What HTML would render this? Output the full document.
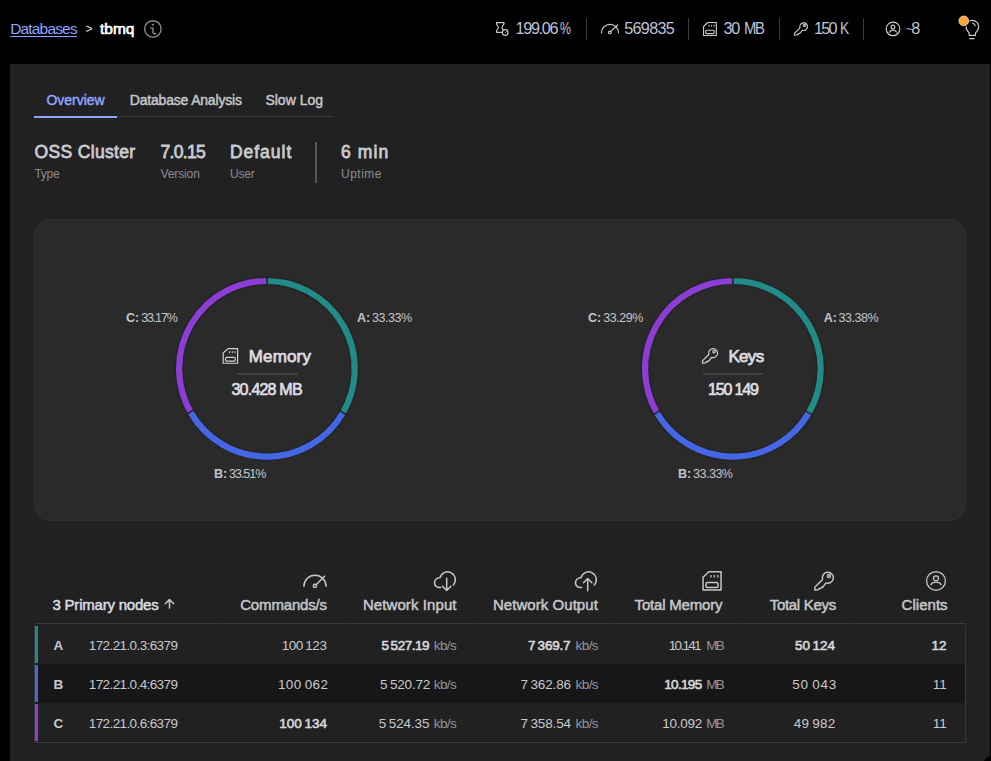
<!DOCTYPE html>
<html><head><meta charset="utf-8">
<style>
html,body{margin:0;padding:0;}
body{width:991px;height:761px;overflow:hidden;background:#000;position:relative;font-family:"Liberation Sans",sans-serif;}
.t{position:absolute;white-space:nowrap;line-height:1;}
.abs{position:absolute;}
#panel{left:10px;top:64px;width:980px;height:697px;background:#212121;clip-path:polygon(0 0,100% 0,100% 691.3px,973.6px 697px,0 697px);}
#card{left:34px;top:219px;width:932px;height:302px;background:#2a2a2a;border-radius:16px;box-shadow:0 0 0 1px #2d2d2d inset;}
.sep{position:absolute;width:1px;background:#3c3c3c;}
</style></head><body>
<div id="panel" class="abs"></div>
<div id="card" class="abs"></div>
<!-- header separators -->
<div class="sep" style="left:586px;top:18px;height:22px;"></div>
<div class="sep" style="left:688px;top:18px;height:22px;"></div>
<div class="sep" style="left:779px;top:18px;height:22px;"></div>
<div class="sep" style="left:863px;top:18px;height:22px;"></div>
<!-- tabs lines -->
<div class="abs" style="left:34px;top:116px;width:299px;height:1px;background:#3a3a3a;"></div>
<div class="abs" style="left:34px;top:116px;width:83px;height:2px;background:#8ea4ff;"></div>
<!-- info divider -->
<div class="abs" style="left:315px;top:142px;width:2px;height:41px;background:#575757;"></div>
<!-- table -->
<div class="abs" style="left:35px;top:623px;width:931px;height:1px;background:#3a3a3a;"></div>
<div class="abs" style="left:221px;top:623px;width:1px;height:1px;background:#1c1c1c;"></div>
<div class="abs" style="left:344px;top:623px;width:1px;height:1px;background:#1c1c1c;"></div>
<div class="abs" style="left:474px;top:623px;width:1px;height:1px;background:#1c1c1c;"></div>
<div class="abs" style="left:615px;top:623px;width:1px;height:1px;background:#1c1c1c;"></div>
<div class="abs" style="left:741px;top:623px;width:1px;height:1px;background:#1c1c1c;"></div>
<div class="abs" style="left:853px;top:623px;width:1px;height:1px;background:#1c1c1c;"></div>
<div class="abs" style="left:34px;top:625px;width:1px;height:118px;background:#3a3a3a;"></div>
<div class="abs" style="left:965px;top:625px;width:1px;height:118px;background:#3a3a3a;"></div>
<div class="abs" style="left:34px;top:742px;width:932px;height:1px;background:#3a3a3a;"></div>
<div class="abs" style="left:35px;top:664px;width:930px;height:39px;background:#171717;"></div>
<div class="abs" style="left:35px;top:626px;width:3px;height:37px;background:#228b88;"></div>
<div class="abs" style="left:35px;top:665px;width:3px;height:37px;background:#4567e6;"></div>
<div class="abs" style="left:35px;top:704px;width:3px;height:37px;background:#8c3dd6;"></div>
<svg class="abs" style="left:0;top:0" width="991" height="761" viewBox="0 0 991 761">
<g fill="none" stroke-linecap="round" stroke-linejoin="round">
<g stroke="#c9c9c9" stroke-width="1.2"><path d="M502.3,32.3 H496.5 V31.3 C496.5,30 498.4,28.6 498.4,27.5 C498.4,26.4 496.5,25 496.5,23.7 V22.6 H504 V23.7 C504,25 502,26.4 502,27.5 C502,28.1 502.4,28.9 503,29.6"/><circle cx="505.2" cy="32.5" r="2.8"/><path d="M505.2,32.6 L506.1,31.8" stroke-width="0.9"/><path d="M601.5,32.8 A8.5,8.5 0 0 1 618.5,32.8"/><circle cx="609.8" cy="32.4" r="1.35"/><path d="M610.8,31.4 L617.7,25"/><g transform="translate(703,22) scale(0.71) translate(-702.3,-571)" stroke-width="1.620"><path d="M703.05,577.3 L708.9,571.75 H721.05 V590.05 H703.05 Z"/><path d="M710.9,574.9 V577.6 M714.4,574.9 V577.6 M717.8,574.9 V577.6" stroke-linecap="butt" stroke-opacity="0.85"/><rect x="706" y="582.6" width="12.1" height="4.8" rx="1.5"/></g><g transform="translate(794,22) scale(0.7) translate(-814.1,-571.1)" stroke-width="1.643"><path d="M822.6,579.4 L815,587 L814.7,590 L818.2,589.7 L819.3,588.4 L820.4,588.7 L821.4,587.3 L822.5,587.5 L825.9,582.9 A5.5,5.5 0 1 0 822.6,579.4 Z"/><circle cx="828.9" cy="576" r="1.45"/></g><circle cx="893" cy="28.9" r="6.8"/><circle cx="893" cy="27" r="1.9"/><path d="M889.4,32.3 C890,30.7 891.2,30.1 893,30.1 C894.8,30.1 896,30.7 896.6,32.3"/><path d="M969.2,35.4 V33 C967.6,31.6 966.1,29.6 966.1,26.6 A6.25,6.25 0 0 1 978.6,26.6 C978.6,29.6 977.1,31.6 975.5,33 V35.4 Z"/><path d="M969.7,38.7 H974.1"/><path d="M972.8,23.2 A3.6,3.6 0 0 1 975.2,25.6"/></g><circle cx="963.8" cy="20.9" r="6.2" fill="#000"/><circle cx="963.8" cy="20.9" r="4.9" fill="#faa630" stroke="#f3e6d0" stroke-width="0.7"/><g stroke="#929292" stroke-width="1.35"><circle cx="152.9" cy="28.9" r="8.2"/><path d="M150.5,28.1 H153 V32.2 Q153,33.7 154.5,33.7 H155.7"/></g><circle cx="152.8" cy="24.8" r="1.05" fill="#929292"/>
<g stroke="#c5c5cb" stroke-width="1.5"><path d="M303.9,586.3 A11.1,11.1 0 0 1 326.1,586.3"/><circle cx="314.9" cy="585.9" r="1.6"/><path d="M316.1,584.7 L324.6,576.2"/><path d="M440.67,587.43 A4.9,4.9 0 1 1 439.93,577.83 A7.8,7.8 0 1 1 453.30,584.92"/><path d="M446.70,578.3 V590.5 M442.50,586.3 L446.70,590.5 L450.90,586.3"/><path d="M581.67,587.43 A4.9,4.9 0 1 1 580.93,577.83 A7.8,7.8 0 1 1 594.30,584.92"/><path d="M587.70,590.8 V578.5 M583.50,582.7 L587.70,578.5 L591.90,582.7"/><g transform="translate(702.3,571) scale(1.0) translate(-702.3,-571)" stroke-width="1.500"><path d="M703.05,577.3 L708.9,571.75 H721.05 V590.05 H703.05 Z"/><path d="M710.9,574.9 V577.6 M714.4,574.9 V577.6 M717.8,574.9 V577.6" stroke-linecap="butt" stroke-opacity="0.85"/><rect x="706" y="582.6" width="12.1" height="4.8" rx="1.5"/></g><g transform="translate(814.1,571.1) scale(1.0) translate(-814.1,-571.1)" stroke-width="1.450"><path d="M822.6,579.4 L815,587 L814.7,590 L818.2,589.7 L819.3,588.4 L820.4,588.7 L821.4,587.3 L822.5,587.5 L825.9,582.9 A5.5,5.5 0 1 0 822.6,579.4 Z"/><circle cx="828.9" cy="576" r="1.45"/></g><g stroke-width="1.25"><circle cx="936" cy="580.9" r="9.4"/><circle cx="936" cy="578.3" r="2.5"/><path d="M930.9,584.6 C931.8,582.9 933.5,582.2 936,582.2 C938.5,582.2 940.2,582.9 941.1,584.6"/></g><path d="M169.5,608 V599.8 M165.3,603.8 L169.5,599.6 L173.7,603.8"/></g>
<g stroke="#d0d1d6" stroke-width="1.2"><g transform="translate(222.6,348) scale(0.8) translate(-702.3,-571)" stroke-width="1.500"><path d="M703.05,577.3 L708.9,571.75 H721.05 V590.05 H703.05 Z"/><path d="M710.9,574.9 V577.6 M714.4,574.9 V577.6 M717.8,574.9 V577.6" stroke-linecap="butt" stroke-opacity="0.85"/><rect x="706" y="582.6" width="12.1" height="4.8" rx="1.5"/></g><g transform="translate(701.9,347.7) scale(0.815) translate(-814.1,-571.1)" stroke-width="1.472"><path d="M822.6,579.4 L815,587 L814.7,590 L818.2,589.7 L819.3,588.4 L820.4,588.7 L821.4,587.3 L822.5,587.5 L825.9,582.9 A5.5,5.5 0 1 0 822.6,579.4 Z"/><circle cx="828.9" cy="576" r="1.45"/></g></g>
</g>
<path d="M266.90,277.20A91.6,91.6 0 0 1 346.24,414.58L339.65,410.78A84.0,84.0 0 0 0 266.90,284.80Z" fill="#228b88" stroke="#242424" stroke-width="1.4"/>
<path d="M346.24,414.58A91.6,91.6 0 0 1 187.08,413.73L193.70,410.01A84.0,84.0 0 0 0 339.65,410.78Z" fill="#4567e6" stroke="#242424" stroke-width="1.4"/>
<path d="M187.08,413.73A91.6,91.6 0 0 1 266.90,277.20L266.90,284.80A84.0,84.0 0 0 0 193.70,410.01Z" fill="#8c3dd6" stroke="#242424" stroke-width="1.4"/><path d="M732.90,277.20A91.6,91.6 0 0 1 812.09,414.83L805.52,411.01A84.0,84.0 0 0 0 732.90,284.80Z" fill="#228b88" stroke="#242424" stroke-width="1.4"/>
<path d="M812.09,414.83A91.6,91.6 0 0 1 653.45,414.38L660.04,410.60A84.0,84.0 0 0 0 805.52,411.01Z" fill="#4567e6" stroke="#242424" stroke-width="1.4"/>
<path d="M653.45,414.38A91.6,91.6 0 0 1 732.90,277.20L732.90,284.80A84.0,84.0 0 0 0 660.04,410.60Z" fill="#8c3dd6" stroke="#242424" stroke-width="1.4"/>
<g stroke="#474747" stroke-width="1.6">
<line x1="237" y1="374" x2="298" y2="374"/>
<line x1="703" y1="374" x2="763" y2="374"/>
</g>
</svg>
<div class="t" id="t0" style="left:10.20px;top:20.68px;font-size:15.5px;font-weight:400;color:#8ea4ff;letter-spacing:-0.832px;text-decoration:underline;text-underline-offset:1.5px;">Databases</div>
<div class="t" id="t1" style="left:85.50px;top:22.84px;font-size:12px;font-weight:400;color:#e0e0e0;letter-spacing:0.000px;">&gt;</div>
<div class="t" id="t2" style="left:100.00px;top:20.68px;font-size:15.5px;font-weight:400;color:#ffffff;letter-spacing:0.000px;-webkit-text-stroke:0.69px #ffffff;">tbmq</div>
<div class="t" id="t3" style="left:515.40px;top:20.29px;font-size:16.2px;font-weight:400;color:#bfc3d3;letter-spacing:-1.260px;">199.06</div>
<div class="t" id="t4" style="left:560.30px;top:20.29px;font-size:16.2px;font-weight:400;color:#bfc3d3;letter-spacing:0.000px;transform:scaleX(0.76);transform-origin:0 0;">%</div>
<div class="t" id="t5" style="left:624.30px;top:20.29px;font-size:16.2px;font-weight:400;color:#bfc3d3;letter-spacing:-0.720px;">569835</div>
<div class="t" id="t6" style="left:723.40px;top:20.29px;font-size:16.2px;font-weight:400;color:#bfc3d3;letter-spacing:-1.260px;">30</div>
<div class="t" id="t7" style="left:744.00px;top:20.29px;font-size:16.2px;font-weight:400;color:#bfc3d3;letter-spacing:-1.620px;transform:scaleX(0.92);transform-origin:0 0;">MB</div>
<div class="t" id="t8" style="left:814.00px;top:20.29px;font-size:16.2px;font-weight:400;color:#bfc3d3;letter-spacing:-1.710px;">150</div>
<div class="t" id="t9" style="left:839.60px;top:20.29px;font-size:16.2px;font-weight:400;color:#bfc3d3;letter-spacing:0.000px;transform:scaleX(0.85);transform-origin:0 0;">K</div>
<div class="t" id="t10" style="left:905.50px;top:23.87px;font-size:11.5px;font-weight:400;color:#bfc3d3;letter-spacing:0.000px;">~</div>
<div class="t" id="t11" style="left:911.30px;top:20.29px;font-size:16.2px;font-weight:400;color:#bfc3d3;letter-spacing:0.000px;">8</div>
<div class="t" id="t12" style="left:46.50px;top:92.95px;font-size:14px;font-weight:400;color:#8ea4ff;letter-spacing:-0.026px;-webkit-text-stroke:0.45px #8ea4ff;">Overview</div>
<div class="t" id="t13" style="left:129.80px;top:93.15px;font-size:14px;font-weight:400;color:#c6c7cc;letter-spacing:-0.191px;-webkit-text-stroke:0.45px #c6c7cc;">Database Analysis</div>
<div class="t" id="t14" style="left:265.40px;top:93.15px;font-size:14px;font-weight:400;color:#c6c7cc;letter-spacing:0.000px;-webkit-text-stroke:0.45px #c6c7cc;">Slow Log</div>
<div class="t" id="t15" style="left:34.50px;top:144.19px;font-size:17.5px;font-weight:400;color:#c9cad0;letter-spacing:0.342px;-webkit-text-stroke:0.78px #c9cad0;">OSS Cluster</div>
<div class="t" id="t16" style="left:34.50px;top:168.14px;font-size:12px;font-weight:400;color:#8b8c92;letter-spacing:-0.300px;">Type</div>
<div class="t" id="t17" style="left:160.40px;top:144.19px;font-size:17.5px;font-weight:400;color:#c9cad0;letter-spacing:-0.648px;-webkit-text-stroke:0.78px #c9cad0;">7.0.15</div>
<div class="t" id="t18" style="left:160.40px;top:168.14px;font-size:12px;font-weight:400;color:#8b8c92;letter-spacing:-0.090px;">Version</div>
<div class="t" id="t19" style="left:229.90px;top:144.19px;font-size:17.5px;font-weight:400;color:#c9cad0;letter-spacing:0.990px;-webkit-text-stroke:0.78px #c9cad0;">Default</div>
<div class="t" id="t20" style="left:229.90px;top:168.14px;font-size:12px;font-weight:400;color:#8b8c92;letter-spacing:-0.120px;">User</div>
<div class="t" id="t21" style="left:341.00px;top:144.19px;font-size:17.5px;font-weight:400;color:#c9cad0;letter-spacing:1.125px;-webkit-text-stroke:0.78px #c9cad0;">6 min</div>
<div class="t" id="t22" style="left:341.00px;top:168.14px;font-size:12px;font-weight:400;color:#8b8c92;letter-spacing:0.504px;">Uptime</div>
<div class="t" id="t23" style="left:248.80px;top:348.31px;font-size:17px;font-weight:400;color:#dcdde2;letter-spacing:0.144px;-webkit-text-stroke:0.75px #dcdde2;">Memory</div>
<div class="t" id="t24" style="left:231.50px;top:381.76px;font-size:16px;font-weight:400;color:#dcdde2;letter-spacing:-0.788px;-webkit-text-stroke:0.71px #dcdde2;">30.428 MB</div>
<div class="t" id="t25" style="left:728.40px;top:348.31px;font-size:17px;font-weight:400;color:#dcdde2;letter-spacing:-0.660px;-webkit-text-stroke:0.75px #dcdde2;">Keys</div>
<div class="t" id="t26" style="left:708.00px;top:381.76px;font-size:16px;font-weight:400;color:#dcdde2;letter-spacing:-1.140px;-webkit-text-stroke:0.71px #dcdde2;">150 149</div>
<div class="t" id="t27" style="left:126.00px;top:311.82px;font-size:12.5px;font-weight:700;color:#c4c5cc;letter-spacing:0.000px;">C:</div>
<div class="t" id="t28" style="left:141.20px;top:311.82px;font-size:12.5px;font-weight:400;color:#c4c5cc;letter-spacing:-1.152px;">33.17%</div>
<div class="t" id="t29" style="left:357.10px;top:311.82px;font-size:12.5px;font-weight:700;color:#c4c5cc;letter-spacing:0.000px;">A:</div>
<div class="t" id="t30" style="left:371.90px;top:311.82px;font-size:12.5px;font-weight:400;color:#c4c5cc;letter-spacing:-0.432px;">33.33%</div>
<div class="t" id="t31" style="left:213.90px;top:467.62px;font-size:12.5px;font-weight:700;color:#c4c5cc;letter-spacing:0.000px;">B:</div>
<div class="t" id="t32" style="left:229.10px;top:467.62px;font-size:12.5px;font-weight:400;color:#c4c5cc;letter-spacing:-1.044px;">33.51%</div>
<div class="t" id="t33" style="left:588.00px;top:311.82px;font-size:12.5px;font-weight:700;color:#c4c5cc;letter-spacing:0.000px;">C:</div>
<div class="t" id="t34" style="left:603.20px;top:311.82px;font-size:12.5px;font-weight:400;color:#c4c5cc;letter-spacing:-0.432px;">33.29%</div>
<div class="t" id="t35" style="left:823.80px;top:311.82px;font-size:12.5px;font-weight:700;color:#c4c5cc;letter-spacing:0.000px;">A:</div>
<div class="t" id="t36" style="left:838.60px;top:311.82px;font-size:12.5px;font-weight:400;color:#c4c5cc;letter-spacing:-0.468px;">33.38%</div>
<div class="t" id="t37" style="left:677.90px;top:467.62px;font-size:12.5px;font-weight:700;color:#c4c5cc;letter-spacing:0.000px;">B:</div>
<div class="t" id="t38" style="left:693.10px;top:467.62px;font-size:12.5px;font-weight:400;color:#c4c5cc;letter-spacing:-0.504px;">33.33%</div>
<div class="t" id="t39" style="left:52.50px;top:597.30px;font-size:15px;font-weight:400;color:#dcdde2;letter-spacing:-0.219px;-webkit-text-stroke:0.48px #dcdde2;">3 Primary nodes</div>
<div class="t" id="t40" style="left:240.20px;top:597.30px;font-size:15px;font-weight:400;color:#c6c7cc;letter-spacing:-0.160px;-webkit-text-stroke:0.48px #c6c7cc;">Commands/s</div>
<div class="t" id="t41" style="left:362.90px;top:597.30px;font-size:15px;font-weight:400;color:#c6c7cc;letter-spacing:0.090px;-webkit-text-stroke:0.48px #c6c7cc;">Network Input</div>
<div class="t" id="t42" style="left:492.90px;top:597.30px;font-size:15px;font-weight:400;color:#c6c7cc;letter-spacing:0.055px;-webkit-text-stroke:0.48px #c6c7cc;">Network Output</div>
<div class="t" id="t43" style="left:634.60px;top:597.30px;font-size:15px;font-weight:400;color:#c6c7cc;letter-spacing:-0.196px;-webkit-text-stroke:0.48px #c6c7cc;">Total Memory</div>
<div class="t" id="t44" style="left:769.70px;top:597.30px;font-size:15px;font-weight:400;color:#c6c7cc;letter-spacing:-0.300px;-webkit-text-stroke:0.48px #c6c7cc;">Total Keys</div>
<div class="t" id="t45" style="left:901.60px;top:597.30px;font-size:15px;font-weight:400;color:#c6c7cc;letter-spacing:0.030px;-webkit-text-stroke:0.48px #c6c7cc;">Clients</div>
<div class="t" id="t46" style="left:53.50px;top:639.27px;font-size:13.5px;font-weight:700;color:#c8c9ce;letter-spacing:0.000px;">A</div>
<div class="t" id="t47" style="left:88.80px;top:639.27px;font-size:13.5px;font-weight:400;color:#c8c9ce;letter-spacing:-0.604px;">172.21.0.3:6379</div>
<div class="t" id="t48" style="left:53.50px;top:677.97px;font-size:13.5px;font-weight:700;color:#c8c9ce;letter-spacing:0.000px;">B</div>
<div class="t" id="t49" style="left:88.80px;top:677.97px;font-size:13.5px;font-weight:400;color:#c8c9ce;letter-spacing:-0.604px;">172.21.0.4:6379</div>
<div class="t" id="t50" style="left:53.50px;top:716.57px;font-size:13.5px;font-weight:700;color:#c8c9ce;letter-spacing:0.000px;">C</div>
<div class="t" id="t51" style="left:88.80px;top:716.57px;font-size:13.5px;font-weight:400;color:#c8c9ce;letter-spacing:-0.604px;">172.21.0.6:6379</div>
<div class="t" id="t52" style="left:281.70px;top:639.27px;font-size:13.5px;font-weight:400;color:#c8c9ce;letter-spacing:-0.420px;">100&#8201;123</div>
<div class="t" id="t53" style="left:381.40px;top:639.27px;font-size:13.5px;font-weight:400;color:#d6d7dc;letter-spacing:-0.489px;-webkit-text-stroke:0.60px #d6d7dc;">5&#8201;527.19</div>
<div class="t" id="t54" style="left:527.90px;top:639.27px;font-size:13.5px;font-weight:400;color:#d6d7dc;letter-spacing:-0.240px;-webkit-text-stroke:0.60px #d6d7dc;">7&#8201;369.7</div>
<div class="t" id="t55" style="left:668.80px;top:639.27px;font-size:13.5px;font-weight:400;color:#c8c9ce;letter-spacing:-1.692px;">10.141</div>
<div class="t" id="t56" style="left:795.00px;top:639.27px;font-size:13.5px;font-weight:400;color:#d6d7dc;letter-spacing:-0.036px;-webkit-text-stroke:0.60px #d6d7dc;">50&#8201;124</div>
<div class="t" id="t57" style="left:931.60px;top:639.27px;font-size:13.5px;font-weight:400;color:#d6d7dc;letter-spacing:0.000px;-webkit-text-stroke:0.60px #d6d7dc;">12</div>
<div class="t" id="t58" style="left:433.80px;top:639.27px;font-size:13.5px;font-weight:400;color:#94959b;letter-spacing:-0.600px;">kb/s</div>
<div class="t" id="t59" style="left:575.60px;top:639.27px;font-size:13.5px;font-weight:400;color:#94959b;letter-spacing:-0.600px;">kb/s</div>
<div class="t" id="t60" style="left:706.30px;top:639.27px;font-size:13.5px;font-weight:400;color:#94959b;letter-spacing:-1.800px;">MB</div>
<div class="t" id="t61" style="left:277.90px;top:677.97px;font-size:13.5px;font-weight:400;color:#c8c9ce;letter-spacing:0.390px;">100&#8201;062</div>
<div class="t" id="t62" style="left:380.10px;top:677.97px;font-size:13.5px;font-weight:400;color:#c8c9ce;letter-spacing:-0.180px;">5&#8201;520.72</div>
<div class="t" id="t63" style="left:520.60px;top:677.97px;font-size:13.5px;font-weight:400;color:#c8c9ce;letter-spacing:-0.154px;">7&#8201;362.86</div>
<div class="t" id="t64" style="left:664.20px;top:677.97px;font-size:13.5px;font-weight:400;color:#d6d7dc;letter-spacing:-0.648px;-webkit-text-stroke:0.60px #d6d7dc;">10.195</div>
<div class="t" id="t65" style="left:792.20px;top:677.97px;font-size:13.5px;font-weight:400;color:#c8c9ce;letter-spacing:0.756px;">50&#8201;043</div>
<div class="t" id="t66" style="left:932.80px;top:677.97px;font-size:13.5px;font-weight:400;color:#c8c9ce;letter-spacing:0.000px;">11</div>
<div class="t" id="t67" style="left:433.80px;top:677.97px;font-size:13.5px;font-weight:400;color:#94959b;letter-spacing:-0.600px;">kb/s</div>
<div class="t" id="t68" style="left:575.60px;top:677.97px;font-size:13.5px;font-weight:400;color:#94959b;letter-spacing:-0.600px;">kb/s</div>
<div class="t" id="t69" style="left:706.30px;top:677.97px;font-size:13.5px;font-weight:400;color:#94959b;letter-spacing:-1.800px;">MB</div>
<div class="t" id="t70" style="left:279.20px;top:716.57px;font-size:13.5px;font-weight:400;color:#d6d7dc;letter-spacing:0.030px;-webkit-text-stroke:0.60px #d6d7dc;">100&#8201;134</div>
<div class="t" id="t71" style="left:378.80px;top:716.57px;font-size:13.5px;font-weight:400;color:#c8c9ce;letter-spacing:-0.129px;">5&#8201;524.35</div>
<div class="t" id="t72" style="left:520.60px;top:716.57px;font-size:13.5px;font-weight:400;color:#c8c9ce;letter-spacing:-0.154px;">7&#8201;358.54</div>
<div class="t" id="t73" style="left:662.30px;top:716.57px;font-size:13.5px;font-weight:400;color:#c8c9ce;letter-spacing:-0.252px;">10.092</div>
<div class="t" id="t74" style="left:793.80px;top:716.57px;font-size:13.5px;font-weight:400;color:#c8c9ce;letter-spacing:0.252px;">49&#8201;982</div>
<div class="t" id="t75" style="left:932.80px;top:716.57px;font-size:13.5px;font-weight:400;color:#c8c9ce;letter-spacing:0.000px;">11</div>
<div class="t" id="t76" style="left:433.80px;top:716.57px;font-size:13.5px;font-weight:400;color:#94959b;letter-spacing:-0.600px;">kb/s</div>
<div class="t" id="t77" style="left:575.60px;top:716.57px;font-size:13.5px;font-weight:400;color:#94959b;letter-spacing:-0.600px;">kb/s</div>
<div class="t" id="t78" style="left:706.30px;top:716.57px;font-size:13.5px;font-weight:400;color:#94959b;letter-spacing:-1.800px;">MB</div>
</body></html>
